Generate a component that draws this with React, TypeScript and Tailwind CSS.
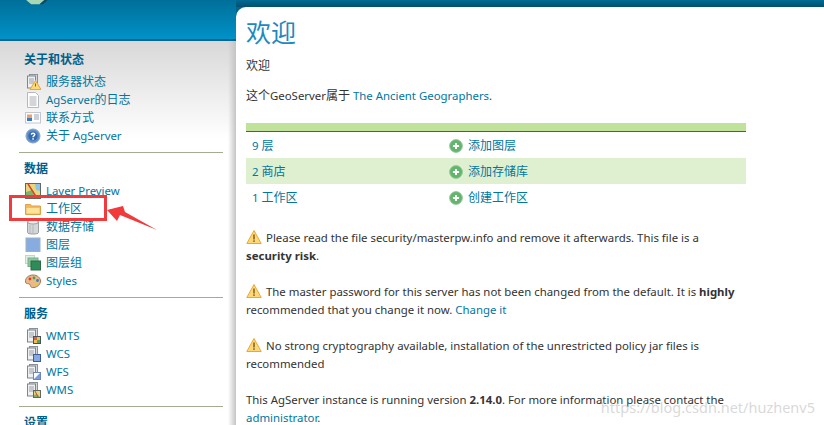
import React from "react";

const FONT = "font-['Noto_Sans','Noto_Sans_CJK_SC',sans-serif]";

// latin runs sit a bit smaller than the chinese ones
function Mixed({ text }: { text: string }) {
  const parts = text.split(/([\u4e00-\u9fff]+)/).filter(Boolean);
  return (
    <>
      {parts.map((p, i) =>
        /[\u4e00-\u9fff]/.test(p) ? (
          <span key={i} className="text-[12px]">
            {p}
          </span>
        ) : (
          <span key={i}>{p}</span>
        )
      )}
    </>
  );
}

function ServerBase() {
  return (
    <>
      <rect x="4.5" y="0.5" width="8" height="11" fill="#d5d8dc" stroke="#8a9096" />
      <rect x="2.5" y="2" width="8" height="12" fill="#eef0f2" stroke="#7f858c" />
      <path d="M4 5h5M4 7h5M4 9h5" stroke="#9aa0a6" />
    </>
  );
}

function WarnIcon({ className = "" }: { className?: string }) {
  return (
    <svg viewBox="0 0 16 16" className={className}>
      <path d="M8 1.5 15.2 14.5H.8Z" fill="#fcd877" stroke="#eba63a" strokeLinejoin="round" />
      <path d="M8 5.5v5" stroke="#8a6420" strokeWidth="1.6" />
      <rect x="7.2" y="11.3" width="1.6" height="1.6" fill="#8a6420" />
    </svg>
  );
}

function Icon({ name }: { name: string }) {
  const cls = "w-4 h-4 shrink-0";
  switch (name) {
    case "status":
      return (
        <svg viewBox="0 0 16 16" className={cls}>
          <ServerBase />
          <path d="M10.5 6.5 16 15.5H5Z" fill="#fcd877" stroke="#eba63a" strokeLinejoin="round" />
          <path d="M10.5 9.5v3" stroke="#8a6420" />
        </svg>
      );
    case "log":
      return (
        <svg viewBox="0 0 16 16" className={cls}>
          <path d="M2.5.5h8l3 3v12h-11Z" fill="#fff" stroke="#b5b8bc" />
          <path d="M4.5 5h7M4.5 7h7M4.5 9h7M4.5 11h7M4.5 13h7" stroke="#a8abb0" />
        </svg>
      );
    case "contact":
      return (
        <svg viewBox="0 0 16 16" className={cls}>
          <rect x="0.5" y="2.5" width="15" height="10.5" fill="#fdfdfe" stroke="#c3c8d0" />
          <rect x="2" y="4.5" width="5" height="6" fill="#f0a060" />
          <rect x="2" y="8" width="5" height="3" fill="#3a78c8" />
          <path d="M9 5h5M9 7h5M9 9h5" stroke="#9aa4b4" />
        </svg>
      );
    case "about":
      return (
        <svg viewBox="0 0 16 16" className={cls}>
          <circle cx="8" cy="8" r="7" fill="#5d8fcb" stroke="#8aa5c8" />
          <circle cx="8" cy="8" r="4.6" fill="#3569ad" />
          <path d="M6.3 6.6C6.4 4.7 9.8 4.7 9.8 6.6 9.8 7.9 8 7.9 8 9.2" fill="none" stroke="#fff" strokeWidth="1.4" />
          <rect x="7.3" y="10.2" width="1.5" height="1.5" fill="#fff" />
        </svg>
      );
    case "preview":
      return (
        <svg viewBox="0 0 16 16" className={cls}>
          <rect x="0.5" y="0.5" width="15" height="15" fill="#e6d77c" stroke="#5f6a5f" />
          <path d="M1 9 7 7l3 8H1Z" fill="#7fb56a" />
          <path d="M10 1h5v7l-4-1Z" fill="#8fc2e8" />
          <path d="M3 1 12 15" stroke="#d8402c" strokeWidth="1.4" />
        </svg>
      );
    case "folder":
      return (
        <svg viewBox="0 0 16 16" className={cls}>
          <path d="M.5 3.5h5l1 1.5h9v8.5H.5Z" fill="#f4b95a" stroke="#e0a04a" />
          <rect x="1.5" y="7" width="13" height="5.5" fill="#fde29a" />
        </svg>
      );
    case "store":
      return (
        <svg viewBox="0 0 16 16" className={cls}>
          <path d="M2.5 3v10.5c0 2 11 2 11 0V3Z" fill="#d4d6d8" stroke="#9b9ea2" />
          <ellipse cx="8" cy="3" rx="5.5" ry="2" fill="#f0f1f2" stroke="#9b9ea2" />
          <path d="M5 6v8M8 6v9" stroke="#b5b8bb" />
        </svg>
      );
    case "layer":
      return (
        <svg viewBox="0 0 16 16" className={cls}>
          <rect x="1" y="1" width="14" height="13.5" fill="#87ade0" stroke="#9db2c8" />
        </svg>
      );
    case "group":
      return (
        <svg viewBox="0 0 16 16" className={cls}>
          <rect x="0.5" y="0.5" width="9" height="8" fill="#dff0e4" stroke="#b7dcc2" />
          <rect x="3" y="3" width="10" height="8.5" fill="#8cc79d" stroke="#76b08a" />
          <rect x="6" y="6" width="9.5" height="9" fill="#2f8b57" stroke="#2c6a48" />
        </svg>
      );
    case "styles":
      return (
        <svg viewBox="0 0 16 16" className={cls}>
          <path d="M8 2C3 2 0 5.500 .5 9c.4 2.500 3.500 1 4.500 2.500S5 15 9 14.500 15.500 11 15.500 8 12.500 2 8 2Z" fill="#e9b98a" stroke="#a8764c" />
          <circle cx="5" cy="6" r="1.400" fill="#d8402c" />
          <circle cx="9" cy="5" r="1.400" fill="#4aa04a" />
          <circle cx="12.500" cy="7.500" r="1.400" fill="#3a78c8" />
          <circle cx="11" cy="11" r="1.400" fill="#e8c83c" />
        </svg>
      );
    case "wmts":
      return (
        <svg viewBox="0 0 16 16" className={cls}>
          <ServerBase />
          <rect x="8.500" y="8.500" width="7" height="7" fill="#e8c05a" stroke="#46525c" />
          <path d="M9 9h3v3H9Z" fill="#d8603c" />
          <path d="M12 12h3v3h-3Z" fill="#5aa05a" />
        </svg>
      );
    case "wcs":
      return (
        <svg viewBox="0 0 16 16" className={cls}>
          <ServerBase />
          <rect x="8.500" y="8.500" width="7" height="7" fill="#4d76c8" stroke="#3d5c9c" />
          <path d="M9 10h6M9 12h6M9 14h6M10 9v6M12 9v6M14 9v6" stroke="#9db8ea" />
        </svg>
      );
    case "wfs":
      return (
        <svg viewBox="0 0 16 16" className={cls}>
          <ServerBase />
          <rect x="8.500" y="8.500" width="7" height="7" fill="#fff" stroke="#6c86b8" />
          <path d="M15 9v6H9Z" fill="#7d9dd8" />
        </svg>
      );
    default:
      return (
        <svg viewBox="0 0 16 16" className={cls}>
          <ServerBase />
          <rect x="8.500" y="8.500" width="7" height="7" fill="#e6d77c" stroke="#5f6a5f" />
          <path d="M9 13l3-1 3 3H9Z" fill="#7fb56a" />
          <path d="M10 9l3 6" stroke="#d8402c" />
        </svg>
      );
  }
}

function PlusIcon() {
  return (
    <svg viewBox="0 0 16 16" className="w-[14px] h-[14px] shrink-0">
      <circle cx="8" cy="8" r="7.300" fill="#63b56d" stroke="#8fc796" />
      <path d="M8 4.500v7M4.500 8h7" stroke="#fff" strokeWidth="2.200" />
    </svg>
  );
}

function NavSection({ title, items }: { title: string; items: [string, string][] }) {
  return (
    <div className="border-b border-[#a3ad93] pb-[7px] mb-[7px] -mx-[5px] px-[5px]">
      <h3 className="font-bold text-[12px] leading-[17px] text-[#00608a] mb-[5px]">{title}</h3>
      <ul>
        {items.map(([icon, label]) => (
          <li key={label} className="h-[18px] flex items-center gap-[5px] text-[#0076a1] pl-px">
            <Icon name={icon} />
            <span>
              <Mixed text={label} />
            </span>
          </li>
        ))}
      </ul>
    </div>
  );
}

function Warning({ children }: { children: React.ReactNode }) {
  return (
    <p className="leading-[17.500px] mb-[19px]">
      <WarnIcon className="inline-block w-[16px] h-[16px] align-[-3px] mr-[4px]" />
      {children}
    </p>
  );
}

const rows = [
  { text: "9 层", action: "添加图层", bg: "bg-white" },
  { text: "2 商店", action: "添加存储库", bg: "bg-[#dff0d0]" },
  { text: "1 工作区", action: "创建工作区", bg: "bg-white" },
];

export default function App() {
  return (
    <div className={`${FONT} relative w-[824px] h-[425px] overflow-hidden bg-white flex text-[11.4px] text-[#333]`}>
      {/* left column */}
      <div className="w-[236px] shrink-0 flex flex-col">
        <div className="relative h-[41px] shrink-0 bg-gradient-to-b from-[#006f99] to-[#0092c8] border-b-[2px] border-[#00688f]">
          <svg viewBox="0 0 30 6" className="absolute left-[24px] top-0 w-[26px] h-[5px]">
            <path d="M2 0h22l-6 5H8Z" fill="#a6d8b4" />
            <path d="M18 5l6-5h4l-6 5Z" fill="#0c4a68" />
          </svg>
        </div>
        <div className="relative flex-1 bg-gradient-to-b from-[#d8d8d8] from-0% to-white to-[25%]">
          <div className="absolute right-0 top-0 bottom-0 w-[8px] bg-gradient-to-r from-transparent to-[#c4c4c4]" />
          <div className="pl-[24px] pr-[18px] pt-[10px]">
            <NavSection
              title="关于和状态"
              items={[
                ["status", "服务器状态"],
                ["log", "AgServer的日志"],
                ["contact", "联系方式"],
                ["about", "关于 AgServer"],
              ]}
            />
            <NavSection
              title="数据"
              items={[
                ["preview", "Layer Preview"],
                ["folder", "工作区"],
                ["store", "数据存储"],
                ["layer", "图层"],
                ["group", "图层组"],
                ["styles", "Styles"],
              ]}
            />
            <NavSection
              title="服务"
              items={[
                ["wmts", "WMTS"],
                ["wcs", "WCS"],
                ["wfs", "WFS"],
                ["wms", "WMS"],
              ]}
            />
            <h3 className="font-bold text-[12px] leading-[17px] text-[#00608a]">设置</h3>
          </div>
        </div>
      </div>

      {/* main column */}
      <div className="flex-1 flex flex-col bg-[#00658b]">
        <div className="h-[7px] shrink-0 bg-gradient-to-b from-[#006b94] to-[#00506e]" />
        <div className="flex-1 bg-white rounded-tl-[10px] pl-[10px] pt-[9px]">
          <h1 className="text-[25px] leading-[32px] text-[#1c8abf] font-normal">欢迎</h1>
          <p className="leading-[18px] mt-[9px] text-[12px]">欢迎</p>
          <p className="leading-[18px] mt-[12px]">
            <Mixed text="这个GeoServer属于" /> <span className="text-[#0076a1]">The Ancient Geographers</span>.
          </p>
          <div className="w-[500px] mt-[18px]">
            <div className="h-[9px] bg-[#c1e29b] border-b-[1px] border-[#15708f]" />
            {rows.map((r) => (
              <div key={r.text} className={`${r.bg} h-[26px] pt-[2px] flex items-center text-[#0076a1]`}>
                <span className="w-[203px] pl-[6px]">
                  <Mixed text={r.text} />
                </span>
                <span className="flex items-center gap-[5px] text-[12px]">
                  <PlusIcon />
                  {r.action}
                </span>
              </div>
            ))}
          </div>
          <div className="w-[500px] mt-[19px]">
            <Warning>
              Please read the file security/masterpw.info and remove it afterwards. This file is a{" "}
              <b>security risk</b>.
            </Warning>
            <Warning>
              The master password for this server has not been changed from the default. It is <b>highly</b>{" "}
              recommended that you change it now. <span className="text-[#0076a1]">Change it</span>
            </Warning>
            <Warning>
              No strong cryptography available, installation of the unrestricted policy jar files is recommended
            </Warning>
            <p className="leading-[17.500px]">
              This AgServer instance is running version <b>2.14.0</b>. For more information please contact the{" "}
              <span className="text-[#0076a1]">administrator</span>.
            </p>
          </div>
        </div>
      </div>

      {/* annotation over the sidebar */}
      <div className="absolute left-[9px] top-[195px] w-[98px] h-[26px] border-[3px] border-[#f03a3c]" />
      <svg viewBox="0 0 54 28" className="absolute left-[105px] top-[204px] w-[54px] h-[28px]">
        <path d="M2 6 18 2 20 8 52 26 15 11 12 17Z" fill="#f03a3c" />
      </svg>

      {/* watermark */}
      <span className="absolute right-[9px] top-[398px] text-[14.500px] leading-[18px] text-[#cfcfcf]/80">
        https://blog.csdn.net/huzhenv5
      </span>
    </div>
  );
}
